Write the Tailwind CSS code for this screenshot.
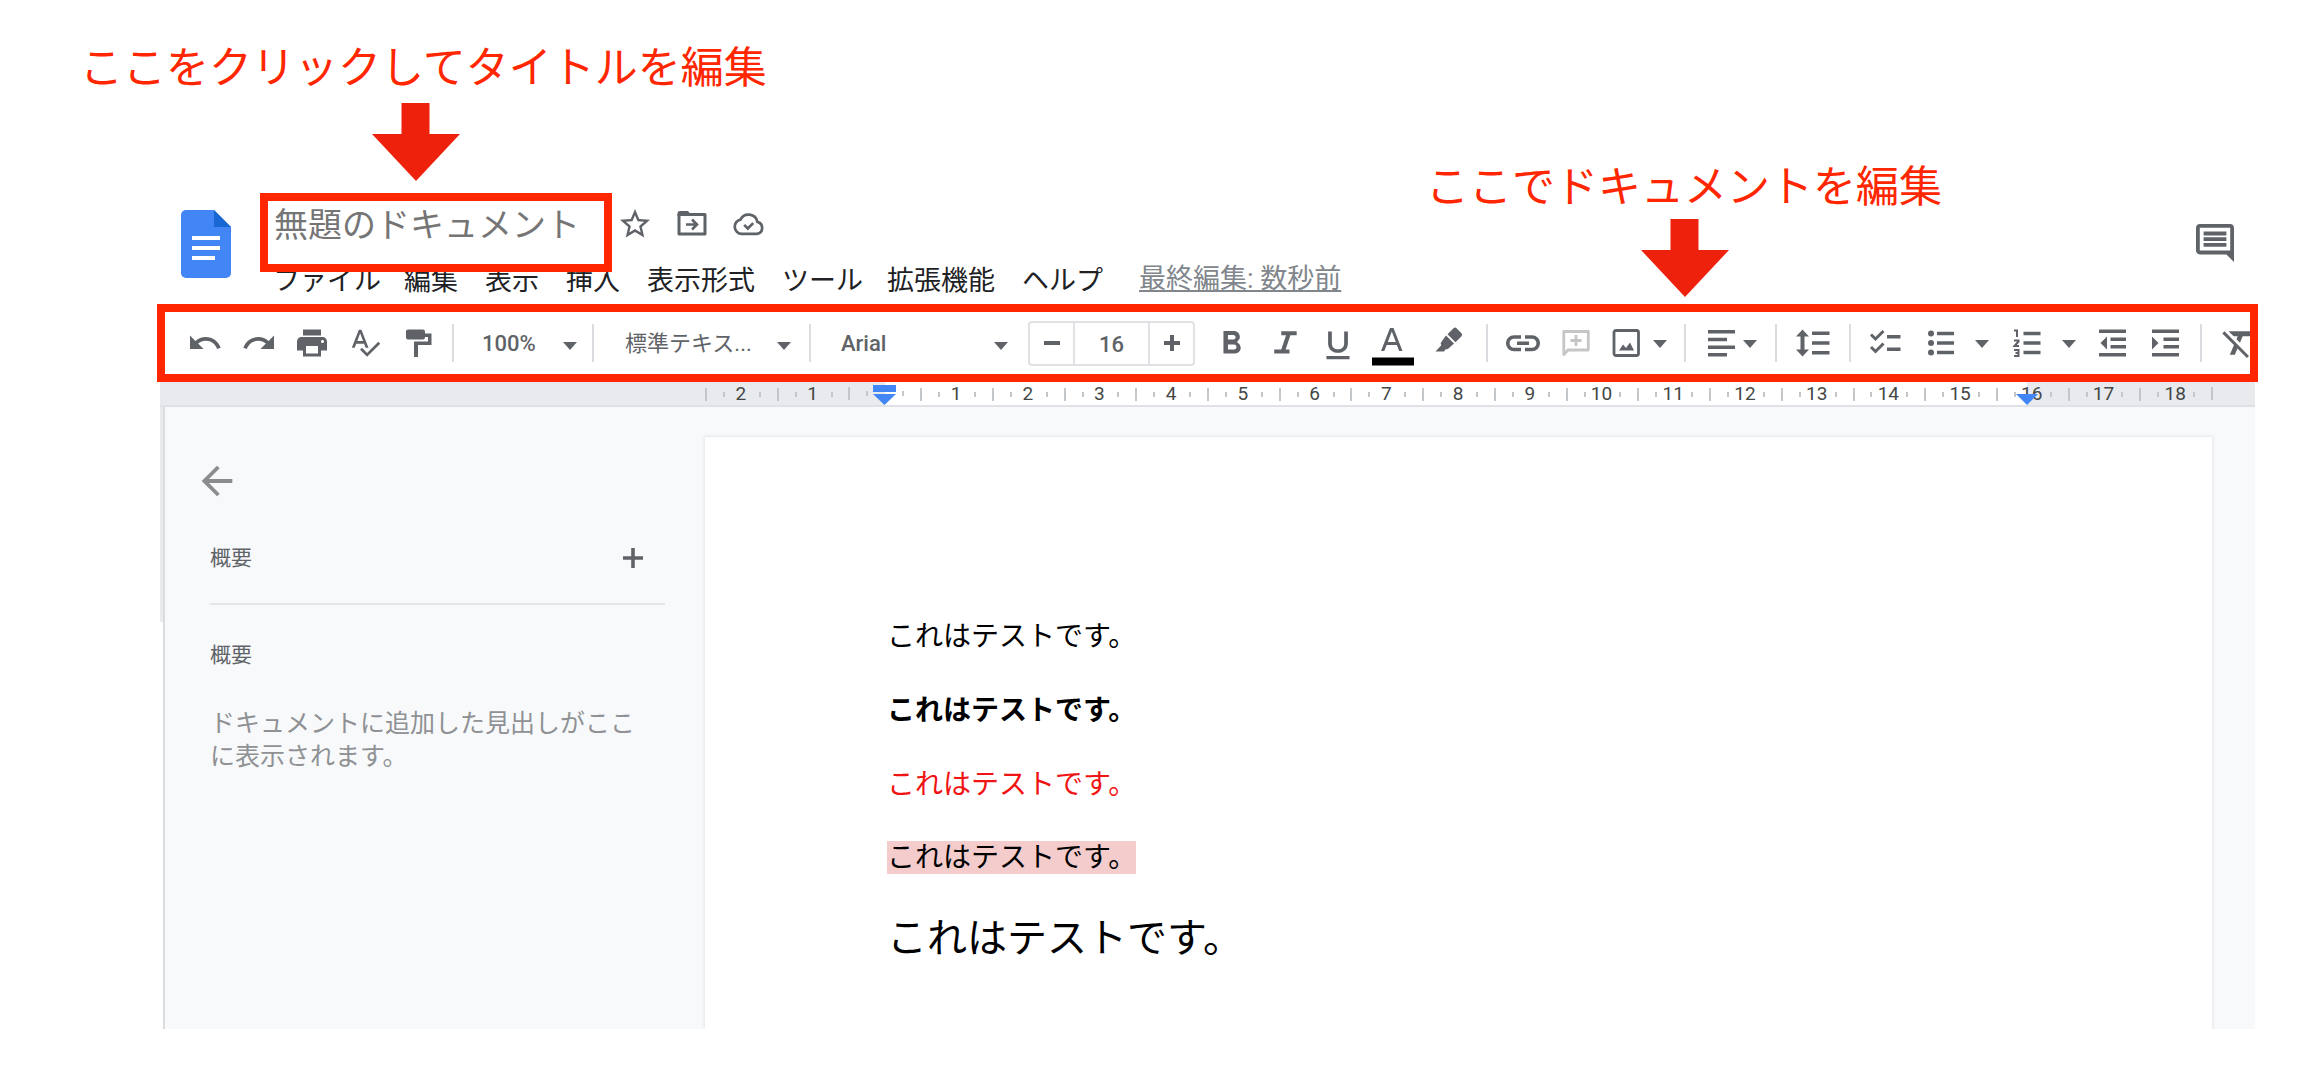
<!DOCTYPE html>
<html lang="ja">
<head>
<meta charset="utf-8">
<meta name="viewport" content="width=device-width, initial-scale=1">
<title>無題のドキュメント</title>
<script src="https://cdn.jsdelivr.net/npm/@tailwindcss/browser@4"></script>
</head>
<body class="bg-white overflow-x-hidden text-[#202124] font-[Roboto,'Noto_Sans_CJK_JP',sans-serif]">

<!-- Shared icon symbols -->
<svg class="hidden" aria-hidden="true">
  <symbol id="caret" viewBox="0 0 14 8"><path d="M0 0h14L7 8z"/></symbol>
  <symbol id="arrow" viewBox="0 0 88 78"><path d="M29.500 0h28v31H88L44 78 0 31h29.500z"/></symbol>
</svg>

<div class="relative">
  <!-- Callout: title -->
  <div class="pt-9 pl-20">
    <p class="text-[43px] leading-[64px] text-[#ff2600] whitespace-nowrap">ここをクリックしてタイトルを編集</p>
    <svg class="mt-[3px] ml-[292px] w-[88px] h-[78px] fill-[#ee220c]"><use href="#arrow"/></svg>
  </div>

  <!-- Callout: toolbar -->
  <div class="absolute left-[1426px] top-[155px]">
    <p class="text-[43px] leading-[64px] text-[#ff2600] whitespace-nowrap">ここでドキュメントを編集</p>
    <svg class="ml-[215px] w-[88px] h-[78px] fill-[#ee220c]"><use href="#arrow"/></svg>
  </div>

  <!-- Header -->
  <header class="mt-3 flex items-start pl-[181px] pr-[68px]">
    <svg class="mt-[17px] w-[50px] h-[68px] shrink-0" viewBox="0 0 50 68">
      <path fill="#4285f4" d="M5 0h28l17 17v46a5 5 0 0 1-5 5H5a5 5 0 0 1-5-5V5a5 5 0 0 1 5-5z"/>
      <path fill="#1967d2" d="M33 0l17 17H33z"/>
      <path fill="#fff" d="M11 26h28v4H11zM11 36h28v4H11zM11 46h23v4H11z"/>
    </svg>
    <div class="ml-[29px]">
      <div class="flex items-start">
        <div class="relative z-10 w-[352px] h-[79px] border-8 border-[#ff2600] shrink-0">
          <input aria-label="タイトル" value="無題のドキュメント" class="block w-full h-12 pl-[6px] text-[34px] leading-[48px] text-[#757575] bg-transparent outline-none">
        </div>
        <div class="flex items-center gap-[21px] mt-[13px] ml-[5px]">
          <button aria-label="スター" class="w-9 h-9"><svg class="w-9 h-9 fill-[#5f6368]" viewBox="0 0 24 24"><path d="M22 9.240l-7.190-.620L12 2 9.190 8.630 2 9.240l5.460 4.730L5.820 21 12 17.270 18.180 21l-1.630-7.030L22 9.240zM12 15.400l-3.760 2.270 1-4.280-3.320-2.880 4.380-.380L12 6.100l1.710 4.040 4.380.380-3.320 2.880 1 4.280L12 15.400z"/></svg></button>
          <button aria-label="移動" class="w-9 h-9"><svg class="w-9 h-9" viewBox="0 0 36 36" fill="none" stroke="#5f6368" stroke-width="3"><path d="M5 8.500h26v19.500H5z" stroke-linejoin="round"/><path d="M3.500 7.500a2.500 2.500 0 0 1 2.500-2.500h8l4 5H3.500z" fill="#5f6368" stroke="none"/><path d="M12 18.500h10M18 13.500l5 5-5 5" stroke-width="2.600"/></svg></button>
          <button aria-label="保存状態" class="w-9 h-9"><svg class="w-9 h-9" viewBox="0 0 24 24" fill="none" stroke="#5f6368" stroke-width="1.800"><path d="M7.200 18.600a4.800 4.800 0 0 1-.900-9.500 6 6 0 0 1 11.300 1.500A4.100 4.100 0 0 1 17.500 18.600z" stroke-linejoin="round"/><path d="M8.800 12.600l2.400 2.400 3.600-3.600"/></svg></button>
        </div>
      </div>
      <nav class="-mt-[11px] pl-[13px] flex items-center gap-[27px] h-10 text-[27px] leading-10 whitespace-nowrap">
        <button class="w-[104px] text-left">ファイル</button>
        <button>編集</button>
        <button>表示</button>
        <button>挿入</button>
        <button>表示形式</button>
        <button class="w-[78px] text-left">ツール</button>
        <button>拡張機能</button>
        <button class="w-[81px] text-left">ヘルプ</button>
        <a href="#history" class="ml-[9px] -mt-1 text-[27px] text-[#80868b] underline underline-offset-2 decoration-2">最終編集: 数秒前</a>
      </nav>
    </div>
    <button aria-label="コメント履歴" class="ml-auto mt-[31px]"><svg class="block w-[38px] h-[38px] fill-[#5f6368]" viewBox="2 2 20 20"><path d="M21.990 4c0-1.100-.890-2-1.990-2H4c-1.100 0-2 .900-2 2v12c0 1.100.900 2 2 2h14l4 4-.010-18zM20 4v12H4V4h16zM6 12h12v2H6zm0-3h12v2H6zm0-3h12v2H6z"/></svg></button>
  </header>

  <!-- Toolbar -->
  <div role="toolbar" class="relative z-10 mt-[3px] ml-[157px] mr-[44px] h-[78px] border-8 border-[#ff2600] bg-white pl-[22px] flex items-center overflow-hidden fill-[#5f6368] text-[#5f6368] text-[22px] font-medium *:shrink-0">
    <button aria-label="元に戻す"><svg class="block size-9" viewBox="0 0 24 24"><path d="M12.500 8c-2.650 0-5.050.990-6.900 2.600L2 7v9h9l-3.620-3.620c1.390-1.160 3.160-1.880 5.120-1.880 3.540 0 6.550 2.310 7.600 5.500l2.370-.780C21.080 11.030 17.150 8 12.500 8z"/></svg></button>
    <button aria-label="やり直す" class="ml-[18px]"><svg class="block size-9" viewBox="0 0 24 24"><path d="M18.400 10.600C16.550 8.990 14.150 8 11.500 8c-4.650 0-8.580 3.030-9.960 7.220L3.900 16c1.050-3.190 4.050-5.500 7.600-5.500 1.950 0 3.730.720 5.120 1.880L13 16h9V7l-3.600 3.600z"/></svg></button>
    <button aria-label="印刷" class="ml-[17px]"><svg class="block size-9" viewBox="0 0 24 24"><path d="M19 8H5c-1.660 0-3 1.340-3 3v6h4v4h12v-4h4v-6c0-1.660-1.340-3-3-3zm-3 11H8v-5h8v5zm3-7c-.550 0-1-.450-1-1s.450-1 1-1 1 .450 1 1-.450 1-1 1zm-1-9H6v4h12V3z"/></svg></button>
    <button aria-label="スペルチェック" class="ml-[17px]"><svg class="block size-9" viewBox="-1 -0.500 26 26"><path d="M12.450 16h2.090L9.430 3H7.570L2.460 16h2.090l1.120-3h5.640l1.140 3zm-6.020-5L8.500 5.480 10.570 11H6.430zm15.160.590l-8.090 8.090L9.830 16l-1.410 1.410 5.090 5.090L23 13l-1.410-1.410z"/></svg></button>
    <button aria-label="書式の貼り付け" class="ml-[18px]"><svg class="block size-9" viewBox="0 0 36 36"><path d="M7 4.500h15a2 2 0 0 1 2 2v6a2 2 0 0 1-2 2H7a2 2 0 0 1-2-2v-6a2 2 0 0 1 2-2zM24 8.500h6.500v11.500H17V32h-4V16.500h14V12h-3z"/></svg></button>
    <span class="ml-[15px] w-[2px] h-[38px] bg-[#dadce0]"></span>

    <div class="relative ml-[28px] w-[95px] flex items-center">
      <select aria-label="ズーム" class="w-full appearance-none bg-transparent outline-none"><option>100%</option></select>
      <svg class="absolute right-0 top-[15px] w-[14px] h-2 pointer-events-none"><use href="#caret"/></svg>
    </div>
    <span class="ml-[15px] w-[2px] h-[38px] bg-[#dadce0]"></span>
    <div class="relative ml-[31px] w-[166px] flex items-center">
      <select aria-label="スタイル" class="w-full appearance-none bg-transparent outline-none font-normal"><option>標準テキス...</option></select>
      <svg class="absolute right-0 top-[15px] w-[14px] h-2 pointer-events-none"><use href="#caret"/></svg>
    </div>
    <span class="ml-[18px] w-[2px] h-[38px] bg-[#dadce0]"></span>
    <div class="relative ml-[30px] w-[167px] flex items-center">
      <select aria-label="フォント" class="w-full appearance-none bg-transparent outline-none"><option>Arial</option></select>
      <svg class="absolute right-0 top-[15px] w-[14px] h-2 pointer-events-none"><use href="#caret"/></svg>
    </div>

    <div class="ml-[20px] w-[167px] h-[45px] flex border-2 border-[#e0e2e5] rounded">
      <button aria-label="小さく" class="w-[43px] flex items-center justify-center"><svg class="size-4" viewBox="0 0 16 16"><path d="M0 6h16v4H0z"/></svg></button>
      <input aria-label="フォントサイズ" value="16" class="min-w-0 flex-1 text-center border-x-2 border-[#e0e2e5] pt-[2px] outline-none">
      <button aria-label="大きく" class="w-[43px] flex items-center justify-center"><svg class="size-4" viewBox="0 0 16 16"><path d="M0 6h6V0h4v6h6v4h-6v6H6v-6H0z"/></svg></button>
    </div>

    <button aria-label="太字" class="ml-[19px]"><svg class="block size-9" viewBox="0 0 24 24"><path d="M15.600 10.790c.970-.670 1.650-1.770 1.650-2.790 0-2.260-1.750-4-4-4H6.300v15h7.700c2.090 0 3.790-1.700 3.790-3.790 0-1.520-.860-2.820-2.190-3.420zM9.300 6.600h3.600c.830 0 1.500.670 1.500 1.500s-.670 1.500-1.500 1.500H9.300v-3zm4.100 9.700H9.300v-3.300h4.100c.900 0 1.600.700 1.600 1.600s-.700 1.700-1.600 1.700z"/></svg></button>
    <button aria-label="斜体" class="ml-[17px]"><svg class="block size-9" viewBox="0 0 24 24"><path d="M9.500 4.200v2.600h3.200L9.500 16.300H4.800V19H15v-2.700h-2.600l3.200-9.500h4.200V4.200z"/></svg></button>
    <button aria-label="下線" class="ml-[17px]"><svg class="block size-9" viewBox="0 0 24 24"><path d="M12 18.500c3.800 0 6.600-2.400 6.600-6.200V4.300h-2.500v8c0 2.500-1.700 3.900-4.100 3.900s-4.100-1.400-4.100-3.900v-8H5.400v8c0 3.800 2.800 6.200 6.600 6.200zM4.300 20.700v2.100h15.400v-2.100z"/></svg></button>
    <button aria-label="文字色" class="ml-[16px]"><svg class="block w-[42px] h-[48px]" viewBox="0 0 42 48"><path d="M9 32L18 9h3.500L30.500 32h-3.300l-2.400-6H14.700l-2.400 6zM15.800 23h8L19.800 12.500z"/><path fill="#000" d="M0 38.500h42v8H0z"/></svg></button>
    <button aria-label="蛍光ペン" class="ml-[17px]"><svg class="block size-9" viewBox="0 0 36 36"><path d="M22.500 3.200q1.500-1.500 3 0l5 5q1.500 1.500 0 3l-6 6-8-8zM15 10.500l8 8-5.500 5q-1.200 1.200-2.600.400L13 26.500H4.500l5.800-6.300q-1.400-1.700 0-3.200z"/></svg></button>
    <span class="ml-[19px] w-[2px] h-[38px] bg-[#dadce0]"></span>

    <button aria-label="リンク" class="ml-[17px]"><svg class="block size-9" viewBox="0 0 36 36" fill="none" stroke="#5f6368" stroke-width="3.600"><path d="M16 12H9a6 6 0 0 0 0 12.500h7M20 12h7a6 6 0 0 1 0 12.500h-7M12 18.200h12"/></svg></button>
    <button aria-label="コメントを追加" class="ml-[17px]"><svg class="block size-9" viewBox="0 0 36 36" fill="none" stroke="#c4c6c8" stroke-width="2.800"><path d="M5.800 29.500V6.500h24.500v18.500H10z" stroke-linejoin="round"/><path d="M18 10v11M12.500 15.500h11"/></svg></button>
    <button aria-label="画像" class="ml-[14px]"><svg class="block size-9" viewBox="0 0 36 36"><rect x="6" y="5.500" width="24.500" height="25" rx="2" fill="none" stroke="#5f6368" stroke-width="2.800"/><path d="M11 25.500l4-6 3 3.500 4-5.500 4 8z"/></svg></button>
    <svg class="ml-[9px] mt-[2px] w-[14px] h-2"><use href="#caret"/></svg>
    <span class="ml-[17px] w-[2px] h-[38px] bg-[#dadce0]"></span>
    <button aria-label="配置" class="ml-[17px]"><svg class="block size-9" viewBox="0 0 36 36"><path d="M5 5h27v3.500H5zM5 12.700h19v3.500H5zM5 20.400h27v3.500H5zM5 28.100h19v3.500H5z"/></svg></button>
    <svg class="ml-[4px] mt-[2px] w-[14px] h-2"><use href="#caret"/></svg>
    <span class="ml-[18px] w-[2px] h-[38px] bg-[#dadce0]"></span>
    <button aria-label="行間隔" class="ml-[17px]"><svg class="block size-9" viewBox="0 0 36 36"><path d="M8.500 4.500l6.500 7h-4.500v13H15l-6.500 7-6.500-7h4.500v-13H2zM18 6.500h17.500V10H18zM18 16.300h17.500v3.500H18zM18 26h17.500v3.500H18z"/></svg></button>
    <span class="ml-[19px] w-[2px] h-[38px] bg-[#dadce0]"></span>
    <button aria-label="チェックリスト" class="ml-[16px]"><svg class="block size-9" viewBox="0 0 36 36"><path d="M20 10h13.500v3.500H20zM20 22.500h13.500V26H20z"/><path fill="none" stroke="#5f6368" stroke-width="3" d="M4 9.500l4.500 4.500 8-8M4 22l4.500 4.500 8-8"/></svg></button>
    <button aria-label="箇条書き" class="ml-[20px]"><svg class="block size-9" viewBox="0 0 36 36"><circle cx="8" cy="8.500" r="3"/><circle cx="8" cy="18" r="3"/><circle cx="8" cy="27.500" r="3"/><path d="M14 6.700h17v3.600H14zM14 16.200h17v3.600H14zM14 25.700h17v3.600H14z"/></svg></button>
    <svg class="ml-[16px] mt-[2px] w-[14px] h-2"><use href="#caret"/></svg>
    <button aria-label="番号付きリスト" class="ml-[20px]"><svg class="block size-9" viewBox="0 0 36 36"><path d="M14.500 6.700h17v3.600h-17zM14.500 16.200h17v3.600h-17zM14.500 25.700h17v3.600h-17z"/><path fill="none" stroke="#5f6368" stroke-width="2" d="M5 5.500h3V12M5 15.500h4.500v1l-4 4.500H10M5 25h4.500v6H5M6.500 28h3"/></svg></button>
    <svg class="ml-[17px] mt-[2px] w-[14px] h-2"><use href="#caret"/></svg>
    <button aria-label="インデント減" class="ml-[18px]"><svg class="block size-9" viewBox="0 0 36 36"><path d="M5 4.500h27V8H5zM16.500 12.500H32V16H16.500zM16.500 20H32v3.500H16.500zM5 28h27v3.500H5zM13 11.500v13L6.500 18z"/></svg></button>
    <button aria-label="インデント増" class="ml-[17px]"><svg class="block size-9" viewBox="0 0 36 36"><path d="M5 4.500h27V8H5zM16.500 12.500H32V16H16.500zM16.500 20H32v3.500H16.500zM5 28h27v3.500H5zM5 11.500v13l6.500-6.500z"/></svg></button>
    <span class="ml-[17px] w-[2px] h-[38px] bg-[#dadce0]"></span>
    <button aria-label="書式をクリア" class="ml-[17px]"><svg class="block size-10" viewBox="0 0 24 24"><path d="M3.270 5L2 6.270l6.970 6.970L6.500 19h3l1.570-3.660L16.730 21 18 19.730 3.550 5.270 3.270 5zM6 5v.180L8.820 8h2.400l-.720 1.680 2.100 2.100L14.210 8H20V5H6z"/></svg></button>
  </div>

  <!-- Workspace -->
  <div class="ml-[160px] mr-[47px]">
    <div id="ruler" class="relative h-[25px] bg-[#e8eaed] border-b-2 border-[#dfe1e4] pl-[545px] pr-[44px] text-[#444746]">
      <div class="absolute left-[725px] right-[228px] inset-y-0 bg-white"></div>
      <div id="ticks" class="relative flex h-full"></div>
      <svg class="absolute left-[713px] top-[3px] w-[23px] h-5 fill-[#4285f4]" viewBox="0 0 23 20"><path d="M0 0h23v7H0zM0 9h23L11.500 20z"/></svg>
      <svg class="absolute right-[217px] top-3 w-[22px] h-[11px] fill-[#4285f4]" viewBox="0 0 22 11"><path d="M0 0h22L11 11z"/></svg>
    </div>

    <div class="flex bg-[#f8f9fb]">
      <div class="w-[3px] bg-white shrink-0"><div class="h-[215px] bg-[#e8eaed]"></div></div>
      <aside class="w-[542px] shrink-0 border-l-2 border-[#dadce0] pl-[45px] pr-10 text-[#5f6368]">
        <button aria-label="閉じる" class="block mt-[51px] -ml-4"><svg class="size-[46px] fill-[#8a8c8f]" viewBox="0 0 24 24"><path d="M20 11H7.830l5.590-5.590L12 4l-8 8 8 8 1.410-1.410L7.830 13H20v-2z"/></svg></button>
        <div class="mt-[38px] flex items-center justify-between h-8 pr-[22px]">
          <h2 class="text-[21px] leading-8">概要</h2>
          <button aria-label="概要を追加"><svg class="block size-5 fill-[#5f6368]" viewBox="0 0 20 20"><path d="M0 8.200h8.200V0h3.600v8.200H20v3.600h-8.200V20H8.200v-8.200H0z"/></svg></button>
        </div>
        <hr class="mt-[29px] border-t-2 border-[#e4e6e9]">
        <h2 class="mt-[34px] text-[21px] leading-8">概要</h2>
        <p class="mt-9 w-[430px] text-[25px] leading-[33px] text-[#8f9194]">ドキュメントに追加した見出しがここに表示されます。</p>
      </aside>
      <main class="mt-[30px] mr-[43px] flex-1 min-h-[592px] bg-white shadow-[0_0_3px_1px_#e4e6e8] pl-[182px] pt-[179px] text-[28px] leading-[41px] text-black font-['Liberation_Sans','Noto_Sans_CJK_JP',sans-serif]">
        <p>これはテストです。</p>
        <p class="mt-[33px] font-bold">これはテストです。</p>
        <p class="mt-[33px] text-[#f01414]">これはテストです。</p>
        <p class="mt-[32px] flex"><mark class="my-1 leading-[33px] bg-[#f4cccc] text-black">これはテストです。</mark></p>
        <p class="mt-[30px] text-[40px] leading-[60px]">これはテストです。</p>
      </main>
    </div>
  </div>
</div>

<script>
  const labels = [2, 1, '', ...Array.from({ length: 18 }, (_, i) => i + 1)];
  document.getElementById('ticks').innerHTML = labels.map((n, i) => `
    <div class="flex-1 grid grid-cols-4 items-center">
      <span class="row-start-1 col-start-1 w-[2px] h-[13px] bg-[#c4c7ca]"></span>
      <span class="row-start-1 col-start-2 w-[2px] h-[5px] bg-[#c4c7ca]"></span>
      <span class="row-start-1 col-start-4 w-[2px] h-[5px] bg-[#c4c7ca]"></span>
      <span class="row-start-1 col-start-1 col-span-4 text-center text-[19px] leading-6">${n}</span>
    </div>`).join('') + '<div class="w-0 flex items-center"><span class="w-[2px] h-[13px] shrink-0 bg-[#c4c7ca]"></span></div>';
</script>
</body>
</html>
